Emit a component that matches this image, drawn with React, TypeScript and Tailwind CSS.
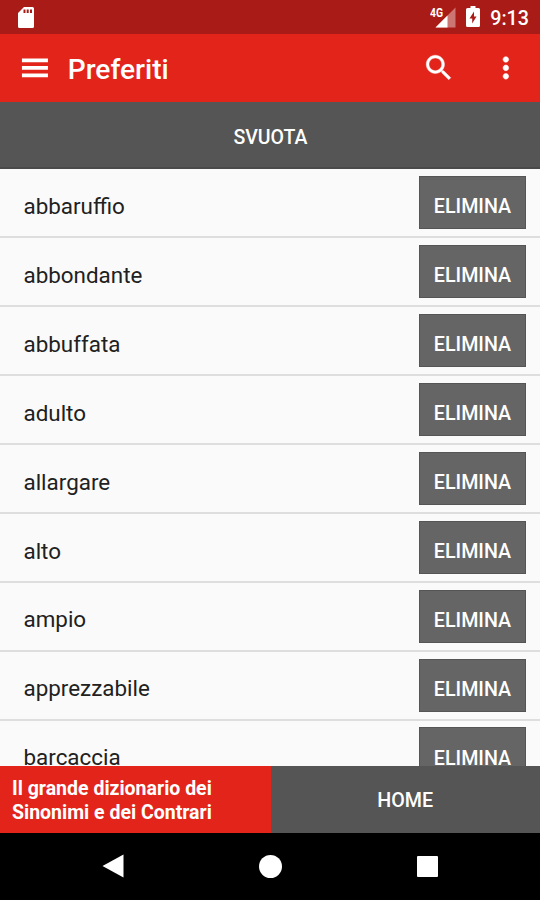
const words = [
  'abbaruffio',
  'abbondante',
  'abbuffata',
  'adulto',
  'allargare',
  'alto',
  'ampio',
  'apprezzabile',
  'barcaccia',
];

function StatusBar() {
  return (
    <div className="h-[34px] shrink-0 bg-[#a91b16] flex items-center justify-between pl-[18px] pr-[11px]">
      <svg className="w-4 h-[21px]" viewBox="0 0 16 21" fill="#fff">
        <path
          fillRule="evenodd"
          d="M6 0h8.5A1.5 1.5 0 0 1 16 1.5v18a1.5 1.5 0 0 1-1.5 1.5h-13A1.5 1.5 0 0 1 0 19.5V6zM5.5 2.5v3.5h2v-3.5zM8.7 2.5v3.5h2v-3.5zM12 2.5v3.5h2v-3.5z"
        />
      </svg>
      <div className="flex items-center">
        <svg className="w-[26px] h-[22px] mr-[10px]" viewBox="0 0 26 22" fill="#fff">
          <path fillOpacity={0.4} d="M25.5 1.5v20H5.5z" />
          <path d="M17.5 9.5v12H5.5z" />
          <text x="0" y="10.5" fontSize="12" fontWeight="700" fontFamily="Roboto, sans-serif" textLength="13" lengthAdjust="spacingAndGlyphs">
            4G
          </text>
        </svg>
        <svg className="w-[14px] h-[21px] mr-[10px] -mt-px" viewBox="0 0 14 21" fill="#fff">
          <path
            fillRule="evenodd"
            d="M4.5 0h5v2h3A1.5 1.5 0 0 1 14 3.5v16a1.5 1.5 0 0 1-1.5 1.5h-11A1.5 1.5 0 0 1 0 19.5v-16A1.5 1.5 0 0 1 1.5 2h3zM8 5.5l-4.5 7h2.7v5L10.5 10.5H8z"
          />
        </svg>
        <span className="text-[19.7px] leading-none font-medium mt-[4px]">9:13</span>
      </div>
    </div>
  );
}

function Toolbar() {
  return (
    <header className="h-[68px] shrink-0 bg-[#e3241b] flex items-center pl-[17.5px]">
      <svg className="w-[33.75px] h-[33.75px]" viewBox="0 0 24 24" fill="#fff">
        <path d="M2.8 18.6h18.5v-2.6H2.8v2.6zm0-5.3h18.5v-2.6H2.8v2.6zm0-7.9v2.6h18.5V5.4H2.8z" />
      </svg>
      <h1 className="ml-[16.5px] text-[28.1px] leading-none font-medium mt-[4px]">Preferiti</h1>
      <svg className="ml-auto w-[33.75px] h-[33.75px]" viewBox="0 0 24 24" fill="#fff" stroke="#fff" strokeWidth={0.25}>
        <path d="M15.5 14h-.79l-.28-.27C15.41 12.59 16 11.11 16 9.5 16 5.91 13.09 3 9.5 3S3 5.91 3 9.5 5.91 16 9.5 16c1.61 0 3.09-.59 4.23-1.57l.27.28v.79l5 4.99L20.49 19l-4.99-5zm-6 0C7.01 14 5 11.99 5 9.5S7.01 5 9.5 5 14 7.01 14 9.5 11.99 14 9.5 14z" />
      </svg>
      <svg className="ml-[34px] mr-[17px] w-[33.75px] h-[33.75px]" viewBox="0 0 24 24" fill="#fff" stroke="#fff" strokeWidth={0.35}>
        <path d="M12 8c1.1 0 2-.9 2-2s-.9-2-2-2-2 .9-2 2 .9 2 2 2zm0 2c-1.1 0-2 .9-2 2s.9 2 2 2 2-.9 2-2-.9-2-2-2zm0 6c-1.1 0-2 .9-2 2s.9 2 2 2 2-.9 2-2-.9-2-2-2z" />
      </svg>
    </header>
  );
}

function WordRow({ word }: { word: string }) {
  return (
    <li className="h-[68.9px] shrink-0 flex items-center justify-between pl-[23.5px] pr-[14px] border-b-2 border-[#dedede]">
      <span className="text-[22.4px] leading-none text-[#212121] mt-[7px]">{word}</span>
      <button className="w-[107px] h-[53px] bg-[#656565] border border-[#555555] text-[19.7px] leading-none font-medium pt-[9px]">
        ELIMINA
      </button>
    </li>
  );
}

function NavBar() {
  return (
    <nav className="flex-1 bg-black flex items-center justify-between px-[102px]">
      <svg className="w-[22px] h-6" viewBox="0 0 22 24" fill="#fff">
        <path d="M21.5.5v23L.5 12z" />
      </svg>
      <div className="w-[23px] h-[23px] rounded-full bg-white" />
      <div className="w-[21px] h-[21px] rounded-[1px] bg-white" />
    </nav>
  );
}

export default function App() {
  return (
    <div className="w-[540px] h-[900px] overflow-hidden flex flex-col bg-[#fafafa] text-white font-[Roboto,sans-serif]">
      <StatusBar />
      <Toolbar />
      <button className="h-[67.4px] shrink-0 bg-[#555555] border-b-2 border-[#4a4a4a] text-[19.5px] leading-none font-medium pt-[6px] pl-px">
        SVUOTA
      </button>
      {/* the last row slides under the footer */}
      <ul className="h-[596.6px] shrink-0 overflow-hidden flex flex-col">
        {words.map((word) => (
          <WordRow key={word} word={word} />
        ))}
      </ul>
      <footer className="h-[67px] shrink-0 flex">
        <p className="w-[270.5px] bg-[#e3241b] pl-3 pt-[11px] text-[19.5px] leading-[24px] font-bold">
          Il grande dizionario dei
          <br />
          Sinonimi e dei Contrari
        </p>
        <button className="flex-1 bg-[#555555] text-[19.7px] leading-none font-medium pt-[3px]">
          HOME
        </button>
      </footer>
      <NavBar />
    </div>
  );
}
